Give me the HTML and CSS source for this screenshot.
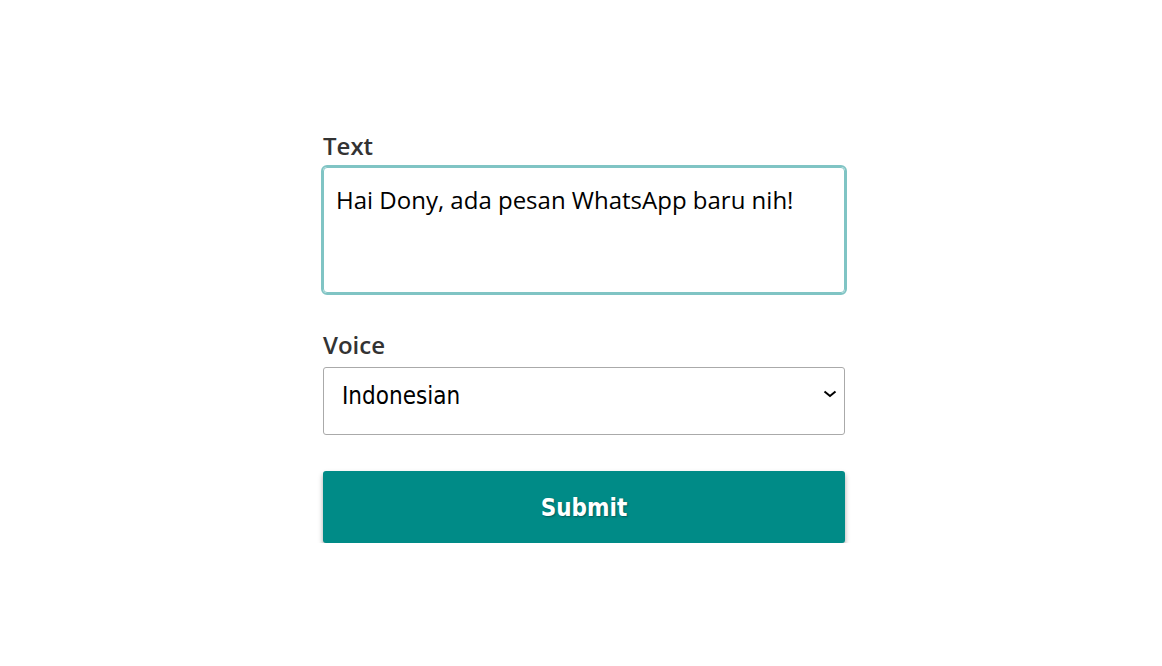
FILE: index.html
```html
<!DOCTYPE html>
<html lang="en">
<head>
    <meta charset="UTF-8">
    <meta name="viewport" content="width=device-width, initial-scale=1.0">
    <title>Text to Speech</title>
    <link rel="stylesheet" href="styles.css">
</head>
<body>
    <form class="tts-form" id="ttsForm">
        <div class="field">
            <label for="text">Text</label>
            <textarea id="text" class="text-input">Hai Dony, ada pesan WhatsApp baru nih!</textarea>
        </div>

        <div class="field voice-field">
            <label for="voice">Voice</label>
            <div class="select-wrap">
                <select id="voice" class="voice-select">
                    <option>Indonesian</option>
                    <option>English</option>
                    <option>Japanese</option>
                </select>
                <svg class="chevron" width="14" height="8" viewBox="0 0 14 8">
                    <path d="M1.5 1.5 L7 6 L12.5 1.5" fill="none" stroke="#000" stroke-width="2"/>
                </svg>
            </div>
        </div>

        <button type="submit" class="submit-btn">Submit</button>
    </form>
</body>
</html>
```

FILE: styles.css
```css
body {
    font-family: "Open Sans", "Noto Sans", sans-serif;
    margin: 0;
    padding: 129px 0 0 6px;
    background: #fff;
}
.tts-form {
    width: 522px;
    margin: 0 auto;
    display: flex;
    flex-direction: column;
}
.field {
    display: flex;
    flex-direction: column;
    gap: 5px;
    margin-bottom: 35px;
}
.voice-field {
    gap: 6px;
    margin-bottom: 36px;
}
label {
    font-size: 24px;
    font-weight: 600;
    color: #333;
}
.text-input {
    box-sizing: border-box;
    width: 100%;
    height: 126px;
    padding: 15px 12px 13px;
    font-family: "Open Sans", "Noto Sans", sans-serif;
    font-size: 24px;
    color: #000;
    border: 1px solid #80c4c4;
    outline: 2px solid #80c4c4;
    border-radius: 4px;
    resize: none;
}
.select-wrap {
    position: relative;
}
.voice-select {
    box-sizing: border-box;
    width: 100%;
    height: 68px;
    padding: 0 18px 10px;
    font-family: "DejaVu Sans Condensed", "DejaVu Sans", sans-serif;
    font-size: 24px;
    color: #000;
    background: #fff;
    border: 1px solid #aaa;
    border-radius: 3px;
    appearance: none;
    -webkit-appearance: none;
}
.chevron {
    position: absolute;
    right: 8px;
    top: 23px;
    pointer-events: none;
}
.submit-btn {
    height: 72px;
    padding-top: 2px;
    background-color: #008b87;
    color: #fff;
    font-family: "DejaVu Sans Condensed", "DejaVu Sans", sans-serif;
    font-size: 24px;
    font-weight: bold;
    text-shadow: 1px 1px 2px rgba(0, 0, 0, 0.35);
    border: none;
    border-radius: 3px;
    box-shadow: 0 3px 5px rgba(0, 0, 0, 0.35);
    cursor: pointer;
}
.submit-btn:hover {
    background-color: #007a76;
}
```
